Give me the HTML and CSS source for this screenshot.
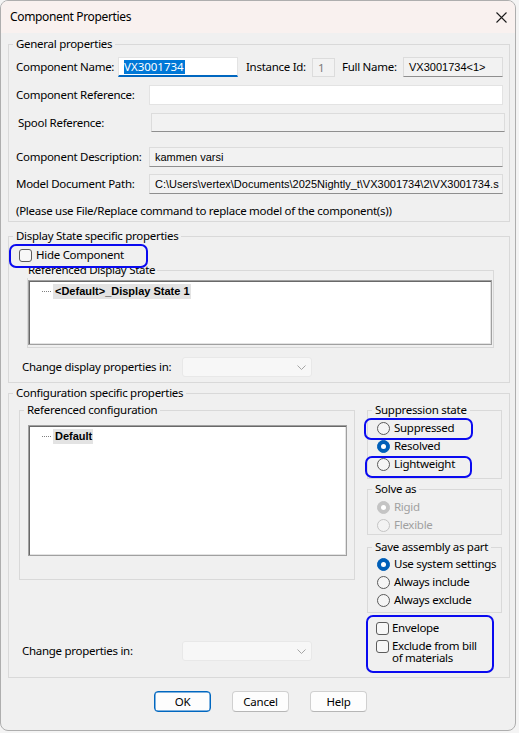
FILE: index.html
```html
<!DOCTYPE html>
<html>
<head>
<meta charset="utf-8">
<title>Component Properties</title>
<link rel="stylesheet" href="styles.css">
</head>
<body>
<div class="window">
  <div class="titlebar">
    <span class="title">Component Properties</span>
    <svg class="close" viewBox="0 0 11 11"><path d="M0.5 0.5L10.5 10.5M10.5 0.5L0.5 10.5" stroke="#1b1b1b" stroke-width="1.1" fill="none"/></svg>
  </div>
  <div class="content">
    <fieldset class="group general">
      <legend>General properties</legend>
      <div class="gbody gen-body">
        <div class="row r1">
          <span class="lbl l-name">Component Name:</span>
          <span class="edit focus name"><span class="sel">VX3001734</span></span>
          <span class="lbl l-inst">Instance Id:</span>
          <span class="box inst">1</span>
          <span class="lbl l-full">Full Name:</span>
          <span class="box full">VX3001734&lt;1&gt;</span>
        </div>
        <div class="row r2">
          <span class="lbl l-wide">Component Reference:</span>
          <span class="edit wide"></span>
        </div>
        <div class="row r3">
          <span class="lbl l-wide">Spool Reference:</span>
          <span class="box wide"></span>
        </div>
        <div class="row r4">
          <span class="lbl l-wide">Component Description:</span>
          <span class="box wide">kammen varsi</span>
        </div>
        <div class="row r5">
          <span class="lbl l-wide">Model Document Path:</span>
          <span class="box wide">C:\Users\vertex\Documents\2025Nightly_t\VX3001734\2\VX3001734.s</span>
        </div>
        <div class="note">(Please use File/Replace command to replace model of the component(s))</div>
      </div>
    </fieldset>

    <fieldset class="group display">
      <legend>Display State specific properties</legend>
      <div class="gbody disp-body">
        <div class="row hide">
          <span class="chk"></span>
          <span class="lbl chk-text">Hide Component</span>
        </div>
        <fieldset class="group inner">
          <legend>Referenced Display State</legend>
          <div class="listbox ds">
            <div class="tree-item"><span class="dots"></span><span class="item-text">&lt;Default&gt;_Display State 1</span></div>
          </div>
        </fieldset>
        <div class="row combo-row cd-row">
          <span class="lbl l-combo">Change display properties in:</span>
          <span class="combo"><svg class="chev" viewBox="0 0 9 5"><path d="M0.5 0.5L4.5 4.5L8.5 0.5" stroke="#a5a5a5" fill="none"/></svg></span>
        </div>
      </div>
    </fieldset>

    <fieldset class="group config">
      <legend>Configuration specific properties</legend>
      <div class="gbody cfg-body">
        <div class="col-left">
          <fieldset class="group refcfg">
            <legend>Referenced configuration</legend>
            <div class="listbox cfg">
              <div class="tree-item"><span class="dots"></span><span class="item-text">Default</span></div>
            </div>
          </fieldset>
          <div class="row combo-row cp-row">
            <span class="lbl l-combo">Change properties in:</span>
            <span class="combo"><svg class="chev" viewBox="0 0 9 5"><path d="M0.5 0.5L4.5 4.5L8.5 0.5" stroke="#a5a5a5" fill="none"/></svg></span>
          </div>
        </div>
        <div class="col-right">
          <fieldset class="group side sup">
            <legend>Suppression state</legend>
            <div class="opts">
              <div class="opt"><span class="radio"></span><span class="lbl">Suppressed</span></div>
              <div class="opt"><span class="radio on"></span><span class="lbl">Resolved</span></div>
              <div class="opt"><span class="radio"></span><span class="lbl">Lightweight</span></div>
            </div>
          </fieldset>
          <fieldset class="group side solve">
            <legend>Solve as</legend>
            <div class="opts">
              <div class="opt dis"><span class="radio on"></span><span class="lbl">Rigid</span></div>
              <div class="opt dis"><span class="radio"></span><span class="lbl">Flexible</span></div>
            </div>
          </fieldset>
          <fieldset class="group side save">
            <legend>Save assembly as part</legend>
            <div class="opts">
              <div class="opt"><span class="radio on"></span><span class="lbl">Use system settings</span></div>
              <div class="opt"><span class="radio"></span><span class="lbl">Always include</span></div>
              <div class="opt"><span class="radio"></span><span class="lbl">Always exclude</span></div>
            </div>
          </fieldset>
          <div class="checks">
            <div class="copt"><span class="chk"></span><span class="lbl">Envelope</span></div>
            <div class="copt two"><span class="chk"></span><span class="lbl wrap">Exclude from bill of materials</span></div>
          </div>
        </div>
      </div>
    </fieldset>

    <div class="buttons">
      <button class="btn default">OK</button>
      <button class="btn">Cancel</button>
      <button class="btn">Help</button>
    </div>
  </div>

  <div class="mark m-hide"></div>
  <div class="mark m-sup"></div>
  <div class="mark m-light"></div>
  <div class="mark m-env"></div>
</div>
</body>
</html>
```

FILE: styles.css
```css
* { box-sizing: border-box; }
html, body { margin: 0; padding: 0; }
body {
  width: 519px;
  height: 733px;
  background: #f4f4f4;
  font-family: "Noto Sans", sans-serif;
  font-size: 11.5px;
  letter-spacing: -0.28px;
  color: #000;
  overflow: hidden;
}
.window {
  position: relative;
  width: 516px;
  height: 731px;
  background: #f0f0f0;
  border: 1px solid #aeaeae;
  border-radius: 8px;
  overflow: hidden;
}
.titlebar {
  height: 32px;
  background: #f9f1ef;
  display: flex;
  align-items: center;
  justify-content: space-between;
  padding: 0 8px 0 9px;
}
.title { font-size: 12px; line-height: 16px; letter-spacing: -0.35px; }
.close { width: 11px; height: 11px; display: block; }

.content { padding: 3px 5px 0 7px; }

fieldset {
  margin: 0;
  padding: 0;
  min-width: 0;
  border: 1px solid #d9d9d9;
}
legend {
  margin-left: 4px;
  padding: 0 3px;
  height: 16px;
  line-height: 16px;
  white-space: nowrap;
}

.row { display: flex; align-items: center; }
.lbl { flex: none; white-space: nowrap; line-height: 16px; }

/* general */
.gen-body { padding: 0 0 2px 7px; }
.r1 { margin-top: 5px; height: 20px; }
.r2 { margin-top: 8px; height: 20px; }
.r3 { margin-top: 8px; height: 19px; padding-left: 2px; }
.r4 { margin-top: 15px; height: 20px; }
.r5 { margin-top: 7px; height: 20px; }
.note { margin-top: 9px; line-height: 16px; white-space: nowrap; }

.l-name { width: 102px; }
.l-inst { width: 66px; margin-left: 8px; }
.l-full { width: 61px; margin-left: 7px; }
.l-wide { width: 133px; }

.edit, .box {
  flex: none;
  display: flex;
  align-items: center;
  height: 20px;
  padding-left: 5px;
  white-space: nowrap;
  overflow: hidden;
}
.edit {
  background: #fff;
  border: 1px solid #e3e3e3;
}
.edit.focus { border-bottom: 2px solid #0067c0; }
.name { width: 120px; }
.sel {
  background: #0078d7;
  color: #fff;
  line-height: 14px;
  padding-right: 1px;
  letter-spacing: 0;
}
.box {
  background: #f2f2f2;
  border: 1px solid #dcdcdc;
  border-bottom-color: #8f8f8f;
  font-family: "Liberation Sans", sans-serif;
  font-size: 11px;
  letter-spacing: 0;
}
.inst {
  width: 23px;
  height: 19px;
  padding-left: 5px;
  border-bottom-color: #dcdcdc;
  color: #7a7a7a;
  font-family: "Noto Sans", sans-serif;
  font-size: 11.5px;
}
.full { width: 100px; }
.wide { width: 354px; }
.r3 .box { height: 19px; }

/* display */
.display { margin-top: 6px; }
.disp-body { padding: 0 0 5px 7px; }
.hide { height: 22px; margin-bottom: -4px; padding-left: 3px; }
.chk {
  flex: none;
  display: block;
  width: 13px;
  height: 13px;
  border: 1px solid #5c5c5c;
  border-radius: 3px;
  background: #f7f7f7;
}
.chk-text { margin-left: 4px; }
.inner { margin-left: 11px; width: 467px; }
.inner legend { margin-left: -2px; padding: 0 2px; }

.listbox {
  background: #fff;
  border: 1px solid #a0a0a0;
  box-shadow: inset 1px 1px 0 #696969, inset -1px -1px 0 #e3e3e3;
  padding: 3px 0 0 13px;
}
.ds { margin: 2px 0 2px 0; width: 464px; height: 65px; }
.tree-item { display: flex; align-items: center; height: 15px; }
.dots {
  width: 9px;
  height: 1px;
  border-top: 1px dotted #808080;
  margin-right: 2px;
}
.item-text {
  background: #e3e3e3;
  font-family: "Liberation Sans", sans-serif;
  font-weight: bold;
  font-size: 11px;
  letter-spacing: 0;
  line-height: 15px;
  padding: 0 1px 0 2px;
}

.combo-row { height: 20px; }
.cd-row { margin-top: 9px; padding-left: 6px; }
.l-combo { width: 160px; }
.combo {
  flex: none;
  width: 130px;
  height: 20px;
  background: #f7f7f7;
  border: 1px solid #e8e8e8;
  border-radius: 3px;
  display: flex;
  align-items: center;
  justify-content: flex-end;
  padding-right: 5px;
}
.chev { width: 9px; height: 5px; display: block; }

/* config */
.config { margin-top: 2px; }
.cfg-body {
  display: grid;
  grid-template-columns: 336px 135px;
  column-gap: 12px;
  align-items: start;
  padding: 1px 7px 13px 10px;
}
.refcfg { width: 336px; }
.cfg { margin: 7px 0 23px 8px; width: 319px; height: 131px; }
.cp-row { margin-top: 61px; padding-left: 3px; }

.side { width: 135px; }
.sup .opts { padding: 1px 0 5px 0; }
.solve { margin-top: 2px; }
.solve .opts { padding: 1px 0 0 0; }
.save { margin-top: 4px; }
.save .opts { padding: 0 0 3px 0; }
.opt {
  display: flex;
  align-items: center;
  height: 18px;
  padding-left: 9px;
}
.radio {
  flex: none;
  position: relative;
  width: 13px;
  height: 13px;
  border-radius: 50%;
  border: 1px solid #5a5a5a;
  background: #f5f5f5;
  margin-right: 4px;
}
.radio.on { background: #005fb8; border-color: #005fb8; }
.radio.on::after {
  content: "";
  position: absolute;
  left: 3px;
  top: 3px;
  width: 5px;
  height: 5px;
  border-radius: 50%;
  background: #fff;
}
.opt.dis { color: #a0a0a0; }
.opt.dis .radio { border-color: #c4c4c4; background: #f3f3f3; }
.opt.dis .radio.on { background: #c4c4c4; }

.checks { margin-top: 6px; }
.copt {
  display: flex;
  align-items: center;
  height: 18px;
  padding-left: 9px;
}
.copt .lbl { margin-left: 3px; }
.copt.two { align-items: flex-start; height: 27px; padding-top: 3px; }
.copt.two .wrap { white-space: normal; width: 92px; line-height: 12px; }

/* buttons */
.buttons {
  display: flex;
  gap: 21px;
  margin-top: 13px;
  padding-left: 146px;
}
.btn {
  width: 57px;
  height: 21px;
  padding: 0;
  font-family: "Noto Sans", sans-serif;
  font-size: 11.5px;
  letter-spacing: -0.2px;
  color: #000;
  background: #fdfdfd;
  border: 1px solid #d0d0d0;
  border-bottom-color: #b6b6b6;
  border-radius: 4px;
}
.btn.default { border: 1px solid #0067c0; box-shadow: inset 0 0 0 0.5px #0067c0; }

/* annotation marks */
.mark {
  position: absolute;
  border: 2px solid #0a0af0;
  border-radius: 7px;
}
.m-hide { left: 8px; top: 243px; width: 139px; height: 24px; }
.m-sup { left: 363px; top: 417px; width: 109px; height: 22px; }
.m-light { left: 364px; top: 455px; width: 107px; height: 22px; }
.m-env { left: 365px; top: 614px; width: 128px; height: 58px; }
```
